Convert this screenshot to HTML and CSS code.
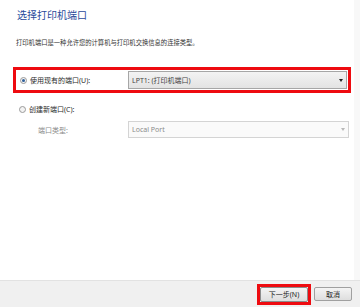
FILE: index.html
```html
<!DOCTYPE html>
<html lang="zh-CN">
<head>
  <meta charset="UTF-8" />
  <meta name="viewport" content="width=device-width, initial-scale=1.0"/>
  <title>添加打印机</title>
  <link rel="stylesheet" href="styles.css">
</head>
<body>

  <div class="wizard">
    <!-- Page body -->
    <main class="wizard-body">
      <h1 class="wizard-title">选择打印机端口</h1>
      <p class="wizard-desc">打印机端口是一种允许您的计算机与打印机交换信息的连接类型。</p>

      <div class="port-row existing highlight">
        <span class="radio checked"></span>
        <span class="radio-label">使用现有的端口(U):</span>
        <div class="combo">
          <span>LPT1: (打印机端口)</span>
          <span class="arrow"></span>
        </div>
      </div>

      <div class="port-row create">
        <span class="radio"></span>
        <span class="radio-label">创建新端口(C):</span>
      </div>

      <div class="port-row type">
        <span class="field-label">端口类型:</span>
        <div class="combo disabled">
          <span>Local Port</span>
          <span class="arrow"></span>
        </div>
      </div>
    </main>

    <!-- Buttons -->
    <footer class="wizard-footer">
      <div class="highlight btn-wrap"><button class="btn">下一步(N)</button></div>
      <button class="btn cancel">取消</button>
    </footer>
  </div>

</body>
</html>
```

FILE: styles.css
```css
/* Reset & Base */
* { margin: 0; padding: 0; box-sizing: border-box; }
body {
  font-family: 'Noto Sans', 'Noto Sans CJK SC', sans-serif;
  color: #2b2b2b;
  background: #fff;
}

.wizard {
  width: 360px; height: 307px;
  display: flex; flex-direction: column;
}

/* Body */
.wizard-body {
  flex: 1;
  padding: 0 9px 0 13px;
  box-shadow: inset -6px 0 0 #f8f8f8;
}
.wizard-title {
  margin: 8px 0 0 4px;
  font-size: 10px; line-height: 14px;
  font-weight: normal;
  color: #2a4a9a;
}
.wizard-desc {
  margin: 16px 0 0 3px;
  font-size: 6.3px; line-height: 10px;
  color: #333;
}

/* Red marking boxes */
.highlight { border: 3px solid #ee0b10; }

/* Rows */
.port-row { display: flex; align-items: center; font-size: 7px; }
.port-row.existing { margin-top: 19px; height: 26px; padding-left: 4px; }
.port-row.create { margin-top: 10px; height: 12px; padding-left: 6px; }
.port-row.type { margin-top: 6px; height: 17px; padding-left: 25px; }

.radio {
  width: 7px; height: 7px;
  border: 1px solid #9a9a9a; border-radius: 50%;
  background: #f3f3f3;
  margin-right: 3px;
  position: relative;
}
.radio.checked::after {
  content: "";
  position: absolute; top: 1px; left: 1px;
  width: 3px; height: 3px; border-radius: 50%;
  background: #2e5f9a;
}
.field-label { color: #8c8c8c; }

/* Combo boxes */
.combo {
  margin-left: auto;
  display: flex; align-items: center; justify-content: space-between;
  padding: 0 3px;
  border: 1px solid #a6a6a6;
  background: linear-gradient(to bottom, #f3f3f3, #e3e3e3);
  color: #444;
}
.existing .combo { width: 219px; height: 18px; margin-right: 1px; }
.type .combo { width: 221px; height: 17px; margin-right: 2px; }
.combo .arrow {
  width: 0; height: 0;
  border-left: 2.5px solid transparent; border-right: 2.5px solid transparent;
  border-top: 3px solid #222;
}
.combo.disabled {
  background: #fafafa;
  border-color: #d4d4d4;
  color: #8a8a8a;
}
.combo.disabled .arrow { border-top-color: #b8b8b8; }

/* Footer */
.wizard-footer {
  height: 27px;
  background: #f0f0f0;
  border-top: 1px solid #e2e2e2;
  display: flex; justify-content: flex-end; align-items: center;
  gap: 3px;
  padding: 0 8px 0 0;
}
.btn-wrap { width: 54px; height: 21px; }
.btn {
  display: block;
  font-family: inherit; font-size: 7px; line-height: 1; color: #222;
  border: 1px solid #8c8c8c; border-radius: 2px;
  background: linear-gradient(to bottom, #f4f4f4, #dedede);
  width: 100%; height: 100%;
}
.btn.cancel { width: 38px; height: 14px; border-color: #a0a0a0; }
```
